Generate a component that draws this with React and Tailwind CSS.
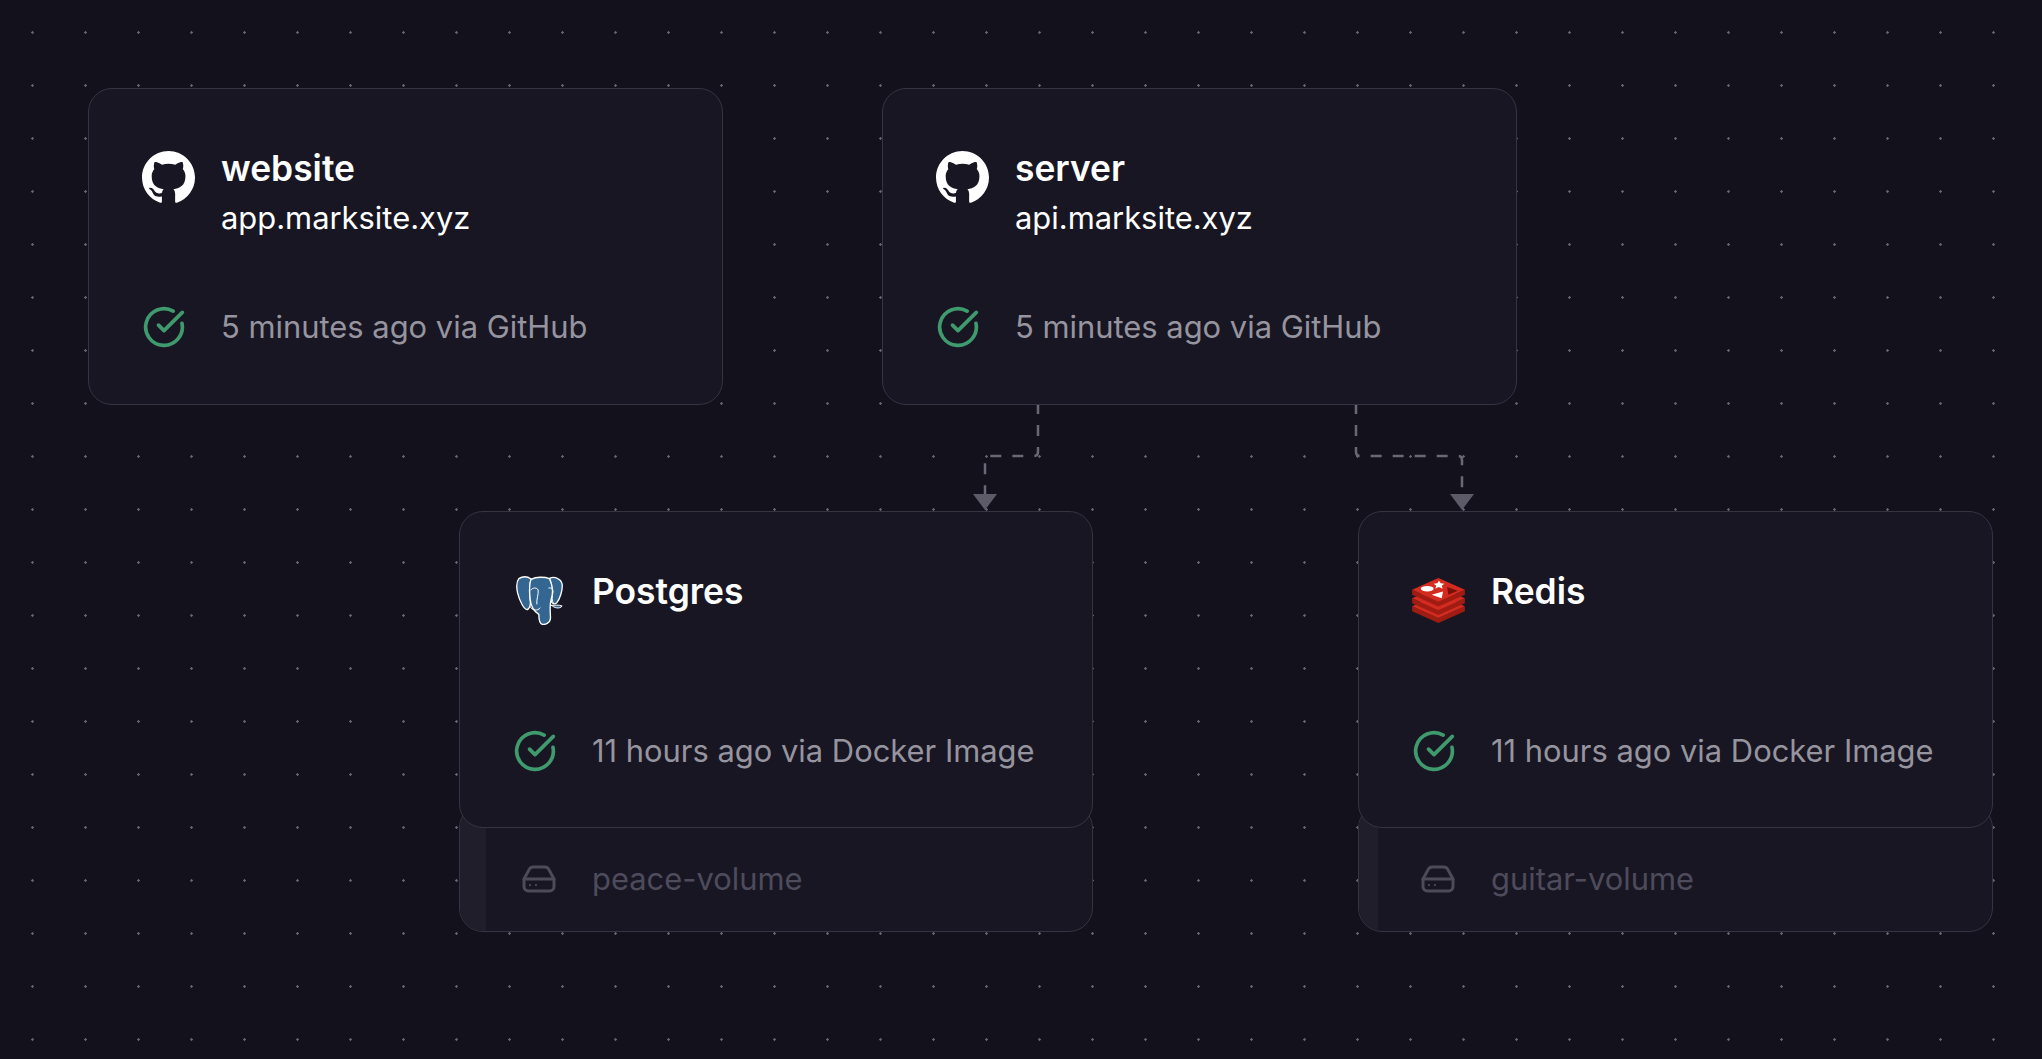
import { CircleCheckBig } from "lucide-react";

// Icons that the icon packages don't carry in this form
function GithubMark() {
	return (
		<svg viewBox="0 0 16 16" className="h-[53px] w-[53px]" fill="#ffffff">
			<path d="M8 0C3.58 0 0 3.58 0 8c0 3.54 2.29 6.53 5.47 7.59.4.07.55-.17.55-.38 0-.19-.01-.82-.01-1.49-2.01.37-2.53-.49-2.69-.94-.09-.23-.48-.94-.82-1.13-.28-.15-.68-.52-.01-.53.63-.01 1.08.58 1.23.82.72 1.21 1.87.87 2.33.66.07-.52.28-.87.51-1.07-1.78-.2-3.64-.89-3.64-3.95 0-.87.31-1.59.82-2.15-.08-.2-.36-1.02.08-2.12 0 0 .67-.21 2.2.82.64-.18 1.32-.27 2-.27.68 0 1.36.09 2 .27 1.53-1.04 2.2-.82 2.2-.82.44 1.1.16 1.92.08 2.12.51.56.82 1.27.82 2.15 0 3.07-1.87 3.75-3.65 3.95.29.25.54.73.54 1.48 0 1.07-.01 1.93-.01 2.2 0 .21.15.46.55.38A8.013 8.013 0 0016 8c0-4.42-3.58-8-8-8z" />
		</svg>
	);
}

function PostgresMark() {
	return (
		<svg viewBox="0 0 140 147" className="h-[49px] w-[47px]" stroke="#ffffff" strokeWidth="4" strokeLinejoin="round" strokeLinecap="round">
			<path fill="#336791" d="M100 7C115 0 135 8 138 25C140 45 130 70 122 80C115 86 108 85 105 75C108 50 108 25 100 7Z" />
			<path fill="#336791" d="M8 8C20 0 35 2 45 9C38 30 40 55 42 70C44 85 42 95 35 100C25 105 10 75 4 50C0 30 2 15 8 8Z" />
			<path fill="#336791" d="M45 10C60 2 85 2 100 8C108 25 112 50 105 70C100 85 102 100 103 125C103 140 88 147 78 145C70 143 68 130 68 115C60 110 45 100 42 70C40 50 38 25 45 10Z" />
			<path fill="none" strokeWidth="3" d="M42 92C48 104 64 106 72 96M44 42C50 34 62 34 66 42C68 54 60 70 62 84M98 36C106 34 112 40 110 50C108 62 106 74 112 82" />
			<path fill="#336791" strokeWidth="3" d="M106 88C114 96 130 100 138 90C128 86 116 88 106 88Z" />
		</svg>
	);
}

function RedisLayer({ y }) {
	return (
		<g transform={`translate(0 ${y})`}>
			<path fill="#a01c12" d="M0 35L78 70L157 35L157 50L78 85L0 50Z" />
			<path fill="#d42b20" d="M78 0L157 35L78 70L0 35Z" />
		</g>
	);
}

function RedisMark() {
	return (
		<svg viewBox="0 0 157 134" className="h-[45px] w-[53px]">
			<RedisLayer y={49} />
			<RedisLayer y={25} />
			<RedisLayer y={0} />
			<path fill="#ffffff" d="M80 8L85 16L96 17L88 23L91 32L80 27L69 31L72 23L64 17L75 16Z" />
			<ellipse cx="45" cy="32" rx="19" ry="8" fill="#ffffff" />
			<path fill="#ffffff" d="M92 40L88 60L58 50Z" />
			<path fill="#7a0f08" d="M104 27L136 38L108 50Z" />
		</svg>
	);
}

// lucide's HardDrive has sharper shoulders than the one in the design
function DriveIcon() {
	return (
		<svg viewBox="0 0 24 24" className="h-[36px] w-[36px] shrink-0" fill="none" stroke="#4d4b58" strokeWidth="2" strokeLinecap="round" strokeLinejoin="round">
			<path d="M2 12L5.5 5.6A3 3 0 0 1 8.2 4H15.8A3 3 0 0 1 18.5 5.6L22 12V17A3 3 0 0 1 19 20H5A3 3 0 0 1 2 17Z" />
			<path d="M2 12H22" />
			<path strokeWidth="1.5" d="M6 16H6.01M10 16H10.01" />
		</svg>
	);
}

const NODES = [
	{ name: "website", url: "app.marksite.xyz", icon: <GithubMark />, deploy: "5 minutes ago via GitHub", pos: "w-[635px] left-[88px] top-[88px]" },
	{ name: "server", url: "api.marksite.xyz", icon: <GithubMark />, deploy: "5 minutes ago via GitHub", pos: "w-[635px] left-[882px] top-[88px]" },
	{
		name: "Postgres",
		icon: <PostgresMark />,
		deploy: "11 hours ago via Docker Image",
		volume: "peace-volume",
		strip: "w-[26px]",
		volumePad: "pl-[35px]",
		pos: "w-[634px] left-[459px] top-[511px]",
	},
	{
		name: "Redis",
		icon: <RedisMark />,
		deploy: "11 hours ago via Docker Image",
		volume: "guitar-volume",
		strip: "w-[19px]",
		volumePad: "pl-[42px]",
		pos: "w-[635px] left-[1358px] top-[511px]",
	},
];

function ServiceNode({ node }) {
	return (
		<div className={`absolute ${node.pos}`}>
			<div className="relative z-10 h-[317px] rounded-[24px] border border-[#363441] bg-[#181622] px-[52px] pt-[54px]">
				<div className="flex h-[100px] gap-[26px]">
					<div className="mt-[7px] flex h-[54px] w-[54px] shrink-0 items-center justify-center">{node.icon}</div>
					<div>
						<div className="text-[35.4px] leading-[52px] font-semibold text-white">{node.name}</div>
						{node.url && <div className="-mt-[2px] text-[30.9px] leading-[50px] text-white">{node.url}</div>}
					</div>
				</div>
				<div className={`flex h-[48px] items-center gap-[26px] ${node.url ? "mt-[60px]" : "mt-[61px]"}`}>
					<div className="ml-px flex w-[53px] shrink-0">
						<CircleCheckBig size={44} strokeWidth={2} color="#3f9a6e" />
					</div>
					<span className="text-[30.9px] text-[#96949f]">{node.deploy}</span>
				</div>
			</div>
			{node.volume && (
				<div className="-mt-[24px] flex h-[128px] overflow-hidden rounded-[24px] border border-[#363441] bg-[#181622]">
					<div className={`shrink-0 bg-[#201e2a] ${node.strip}`} />
					<div className={`flex flex-1 items-center gap-[35px] pt-[22px] ${node.volumePad}`}>
						<DriveIcon />
						<span className="text-[30.9px] text-[#4d4b5c]">{node.volume}</span>
					</div>
				</div>
			)}
		</div>
	);
}

export default function App() {
	return (
		<div
			className="relative h-screen w-full overflow-hidden bg-[#13111c] bg-[radial-gradient(circle,#63616d_1px,transparent_1.5px)] bg-[length:53px_53px] bg-[position:6px_6px]"
			style={{ fontFamily: "Inter, 'Liberation Sans', sans-serif" }}
		>
			{/* connector lines between services */}
			<svg className="absolute top-0 left-0 h-full w-full" fill="none">
				<g stroke="#6a6875" strokeWidth="2.5" strokeDasharray="11 11">
					<path d="M1038 403V452Q1038 456 1034 456H989Q985 456 985 460V496" />
					<path d="M1356 403V452Q1356 456 1360 456H1458Q1462 456 1462 460V496" />
				</g>
				<path d="M973 494H997L985 510Z" fill="#5d5b68" />
				<path d="M1450 494H1474L1462 510Z" fill="#5d5b68" />
			</svg>
			{NODES.map((node) => (
				<ServiceNode key={node.name} node={node} />
			))}
		</div>
	);
}
